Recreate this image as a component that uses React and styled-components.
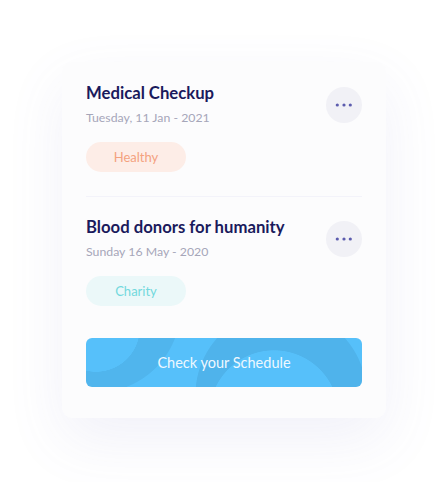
import styled, { createGlobalStyle } from 'styled-components'

const GlobalStyle = createGlobalStyle`
    body {
        margin: 0;
        background: #ffffff;
        font-family: Lato, "Open Sans", sans-serif;
    }
`

const events = [
    { title: 'Medical Checkup', date: 'Tuesday, 11 Jan - 2021', tag: 'Healthy', kind: 'health' },
    { title: 'Blood donors for humanity', date: 'Sunday 16 May - 2020', tag: 'Charity', kind: 'charity' },
]

function Dots() {
    return (
        <svg width="18" height="4" viewBox="0 0 18 4">
            <circle cx="2.3" cy="2" r="1.6" fill="#5c5cae" />
            <circle cx="9" cy="2" r="1.6" fill="#5c5cae" />
            <circle cx="15.3" cy="2" r="1.6" fill="#5c5cae" />
        </svg>
    )
}

function App() {
    return (
        <Page>
            <GlobalStyle />
            <Card>
                {events.map((ev, i) => (
                    <Item key={ev.title} first={i === 0} last={i === events.length - 1}>
                        <Head>
                            <Texts>
                                <Title>{ev.title}</Title>
                                <Date>{ev.date}</Date>
                            </Texts>
                            <MoreButton><Dots /></MoreButton>
                        </Head>
                        <Tag kind={ev.kind}>{ev.tag}</Tag>
                    </Item>
                ))}
                <ScheduleButton>Check your Schedule</ScheduleButton>
            </Card>
        </Page>
    )
}

export default App

const Page = styled.div`
    width: 442px;
    height: 482px;
    padding: 62px 0 0 62px;
    box-sizing: border-box;
`

const Card = styled.div`
    width: 324px;
    box-sizing: border-box;
    padding: 22px 24px 31px;
    background: #fcfcfd;
    border-radius: 10px;
    box-shadow: 0 22px 60px rgba(100, 100, 190, 0.09);
    display: flex;
    flex-direction: column;
`

const Item = styled.div`
    display: flex;
    flex-direction: column;
    align-items: flex-start;
    padding-top: ${props => props.first ? '0' : '21px'};
    padding-bottom: 24px;
    border-bottom: ${props => props.last ? 'none' : '1px solid #f3f3fa'};
    margin-bottom: ${props => props.last ? '8px' : '0'};
`

const Head = styled.div`
    width: 100%;
    display: flex;
    align-items: center;
    justify-content: space-between;
`

const Texts = styled.div`
    display: flex;
    flex-direction: column;
`

const Title = styled.div`
    font-size: 16.7px;
    line-height: 19px;
    font-weight: 700;
    color: #1a1a5c;
`

const Date = styled.div`
    margin-top: 8px;
    font-size: 12.3px;
    line-height: 14px;
    color: #a6a6b9;
`

const MoreButton = styled.button`
    width: 36px;
    height: 36px;
    border: none;
    border-radius: 50%;
    background: #f1f1f6;
    padding: 0;
    display: flex;
    align-items: center;
    justify-content: center;
    cursor: pointer;
`

const Tag = styled.span`
    margin-top: 17px;
    width: 100px;
    height: 30px;
    border-radius: 15px;
    display: flex;
    align-items: center;
    justify-content: center;
    font-size: 13px;
    background: ${props => props.kind === 'health' ? '#fdede7' : '#ebf8f9'};
    color: ${props => props.kind === 'health' ? '#f4a27f' : '#72d8dd'};
`

const ScheduleButton = styled.button`
    height: 49px;
    border: none;
    border-radius: 6px;
    font-family: Lato, sans-serif;
    font-size: 14.5px;
    color: #eef8ff;
    cursor: pointer;
    background-color: #56c0fa;
    background-image:
        radial-gradient(circle 65px at 188px 77px, #56c0fa 99%, transparent 100%),
        radial-gradient(circle 86px at 195px 57px, #4fb3eb 99%, transparent 100%),
        radial-gradient(circle 44px at 10px -10px, #56c0fa 99%, transparent 100%),
        radial-gradient(circle 85px at 10px -30px, #50b5ed 99%, transparent 100%);
`
